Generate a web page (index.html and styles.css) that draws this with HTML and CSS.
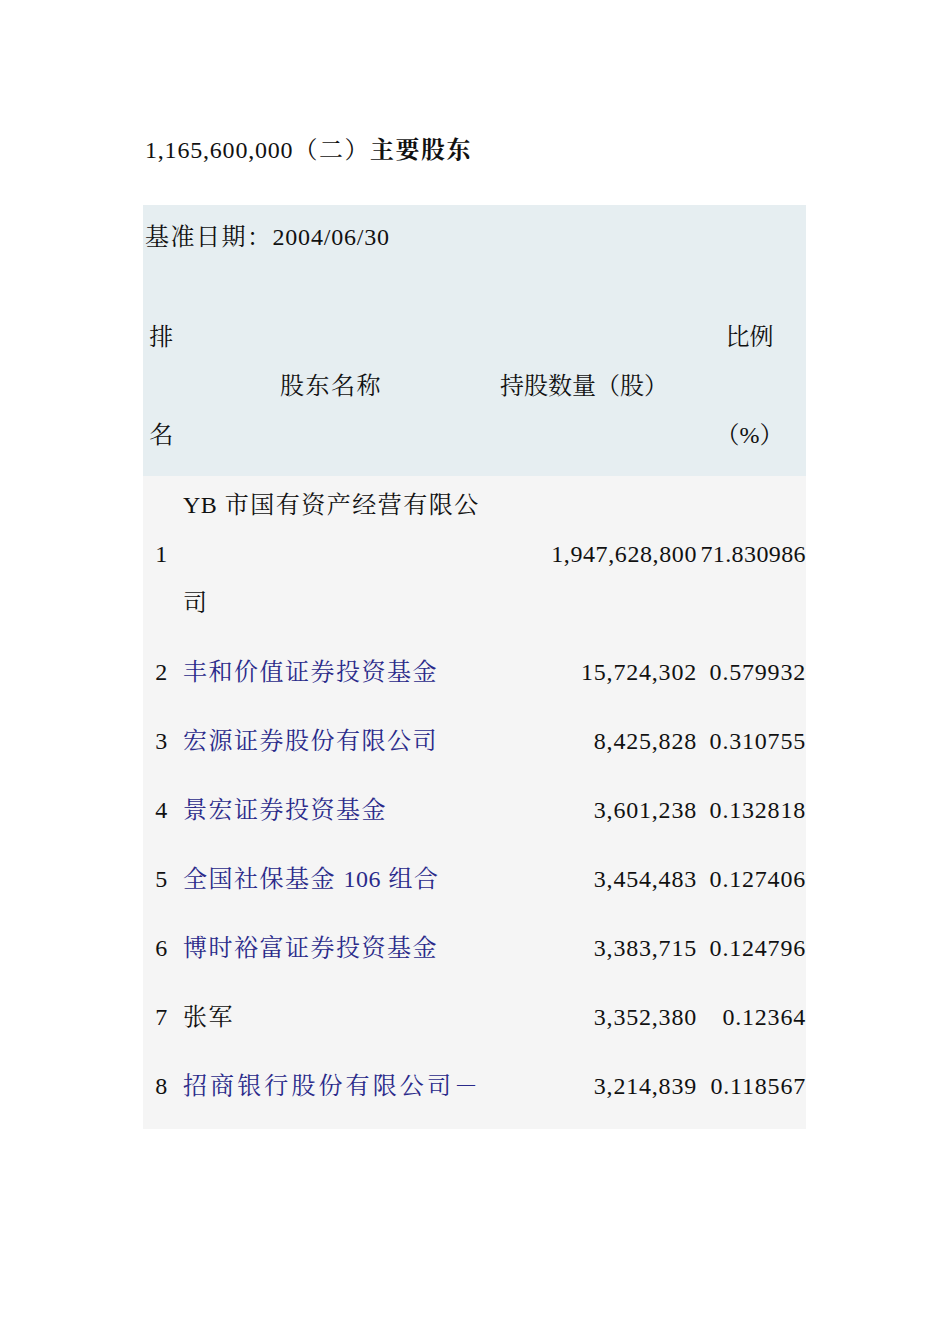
FILE: index.html
```html
<!DOCTYPE html>
<html lang="zh-CN">
<head>
<meta charset="utf-8">
<title>主要股东</title>
<link rel="stylesheet" href="styles.css">
</head>
<body>
<div class="doc">
  <p class="title"><span class="num">1,165,600,000</span>（二）<b>主要股东</b></p>
  <div class="table">
    <div class="head">
      <div class="caption">基准日期：<span class="num">2004/06/30</span></div>
      <div class="row hrow">
        <div class="c rank stack"><span>排</span><span>名</span></div>
        <div class="c name-h">股东名称</div>
        <div class="c qty-h">持股数量（股）</div>
        <div class="c ratio-h stack"><span>比例</span><span>（%）</span></div>
      </div>
    </div>
    <div class="body">
      <div class="row first">
        <div class="c rank">1</div>
        <div class="c name plain stack"><span><span class="latin">YB</span> 市国有资产经营有限公</span><span>司</span></div>
        <div class="c qty num">1,947,628,800</div>
        <div class="c ratio num">71.830986</div>
      </div>
      <div class="row">
        <div class="c rank">2</div>
        <div class="c name">丰和价值证券投资基金</div>
        <div class="c qty num">15,724,302</div>
        <div class="c ratio num">0.579932</div>
      </div>
      <div class="row">
        <div class="c rank">3</div>
        <div class="c name">宏源证券股份有限公司</div>
        <div class="c qty num">8,425,828</div>
        <div class="c ratio num">0.310755</div>
      </div>
      <div class="row">
        <div class="c rank">4</div>
        <div class="c name">景宏证券投资基金</div>
        <div class="c qty num">3,601,238</div>
        <div class="c ratio num">0.132818</div>
      </div>
      <div class="row">
        <div class="c rank">5</div>
        <div class="c name">全国社保基金 <span class="latin">106</span> 组合</div>
        <div class="c qty num">3,454,483</div>
        <div class="c ratio num">0.127406</div>
      </div>
      <div class="row">
        <div class="c rank">6</div>
        <div class="c name">博时裕富证券投资基金</div>
        <div class="c qty num">3,383,715</div>
        <div class="c ratio num">0.124796</div>
      </div>
      <div class="row">
        <div class="c rank">7</div>
        <div class="c name plain">张军</div>
        <div class="c qty num">3,352,380</div>
        <div class="c ratio num">0.12364</div>
      </div>
      <div class="row">
        <div class="c rank">8</div>
        <div class="c name wide">招商银行股份有限公司－</div>
        <div class="c qty num">3,214,839</div>
        <div class="c ratio num">0.118567</div>
      </div>
    </div>
  </div>
</div>
</body>
</html>
```
FILE: styles.css
```css
html, body {
  margin: 0;
  padding: 0;
  background: #ffffff;
}
body {
  font-family: "Liberation Serif", "Noto Serif CJK SC", "Noto Sans CJK SC", serif;
  font-size: 24px;
  line-height: 49px;
  color: #111111;
  letter-spacing: 1.5px;
}
.doc {
  width: 663px;
  margin-left: 143px;
  padding-top: 126px;
}
.title {
  margin: 0 0 30px 0;
  padding-left: 2px;
}
.title b {
  font-weight: bold;
}
.num {
  letter-spacing: 0.8px;
}
.latin {
  letter-spacing: 0.5px;
}
.head {
  background: #e6eef1;
  padding: 8px 0 16px 0;
}
.caption {
  padding-left: 2px;
  margin-bottom: 51px;
}
.row {
  display: grid;
  grid-template-columns: 38px 300px 220px 105px;
}
.hrow {
  height: 147px;
}
.stack {
  display: flex;
  flex-direction: column;
  justify-content: space-between;
}
.rank {
  text-align: center;
  align-self: center;
}
.hrow .rank {
  align-self: stretch;
  align-items: center;
}
.name-h {
  align-self: center;
  text-align: center;
}
.qty-h {
  align-self: center;
  text-align: center;
  padding-right: 14px;
  letter-spacing: 0;
}
.ratio-h {
  align-self: stretch;
  align-items: center;
  padding-right: 8px;
  letter-spacing: 0;
}
.body {
  background: #f5f5f5;
  padding-bottom: 8px;
}
.body .row {
  padding: 10px 0;
}
.body .row.first {
  padding-top: 5px;
}
.name {
  padding-left: 2px;
  color: #2a2a8a;
}
.name.plain {
  color: #111111;
}
.row.first .name {
  height: 147px;
  white-space: nowrap;
}
.name.wide {
  letter-spacing: 3.1px;
  white-space: nowrap;
}
.qty {
  text-align: right;
  align-self: center;
  padding-right: 4px;
  white-space: nowrap;
}
.ratio {
  text-align: right;
  align-self: center;
  white-space: nowrap;
}
.row.first .qty {
  letter-spacing: 0.6px;
}
.row.first .ratio {
  letter-spacing: 0.4px;
  margin-left: -3px;
}
```
